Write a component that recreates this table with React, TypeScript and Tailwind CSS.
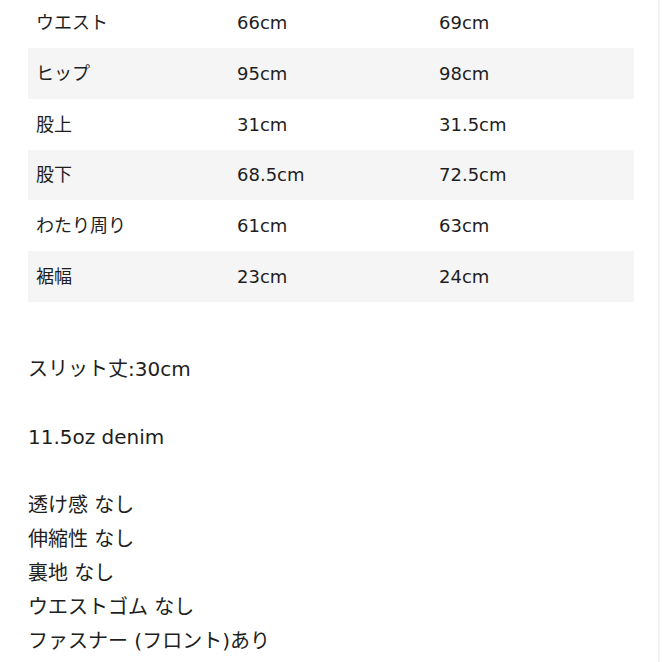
import React from "react";

const rows: [string, string, string][] = [
  ["ウエスト", "66cm", "69cm"],
  ["ヒップ", "95cm", "98cm"],
  ["股上", "31cm", "31.5cm"],
  ["股下", "68.5cm", "72.5cm"],
  ["わたり周り", "61cm", "63cm"],
  ["裾幅", "23cm", "24cm"],
];

const font = { fontFamily: '"DejaVu Sans", "Noto Sans CJK JP", sans-serif' };

export default function App() {
  return (
    <div className="w-[662px] h-[662px] overflow-hidden bg-white flex text-[#1e1e1e]" style={font}>
      <div className="w-[658px] pl-[28px] pr-[24px]">
        <div className="-mt-[2.5px] flex flex-col">
          {rows.map((r, i) => (
            <div
              key={i}
              className={
                "h-[50.7px] flex items-center text-[18px] " +
                (i % 2 === 1 ? "bg-[#f5f5f5]" : "bg-white")
              }
            >
              <div className="w-[209px] pl-[8px]">{r[0]}</div>
              <div className="w-[202px]">{r[1]}</div>
              <div className="flex-1">{r[2]}</div>
            </div>
          ))}
        </div>
        <div className="mt-[50px] text-[20px] leading-[34px]">
          <div>スリット丈:30cm</div>
          <div className="h-[34px]" />
          <div>11.5oz denim</div>
          <div className="h-[34px]" />
          <div>透け感 なし</div>
          <div>伸縮性 なし</div>
          <div>裏地 なし</div>
          <div>ウエストゴム なし</div>
          <div>ファスナー (フロント)あり</div>
        </div>
      </div>
      <div className="w-[2px] bg-[#f1f1f1]" />
    </div>
  );
}
